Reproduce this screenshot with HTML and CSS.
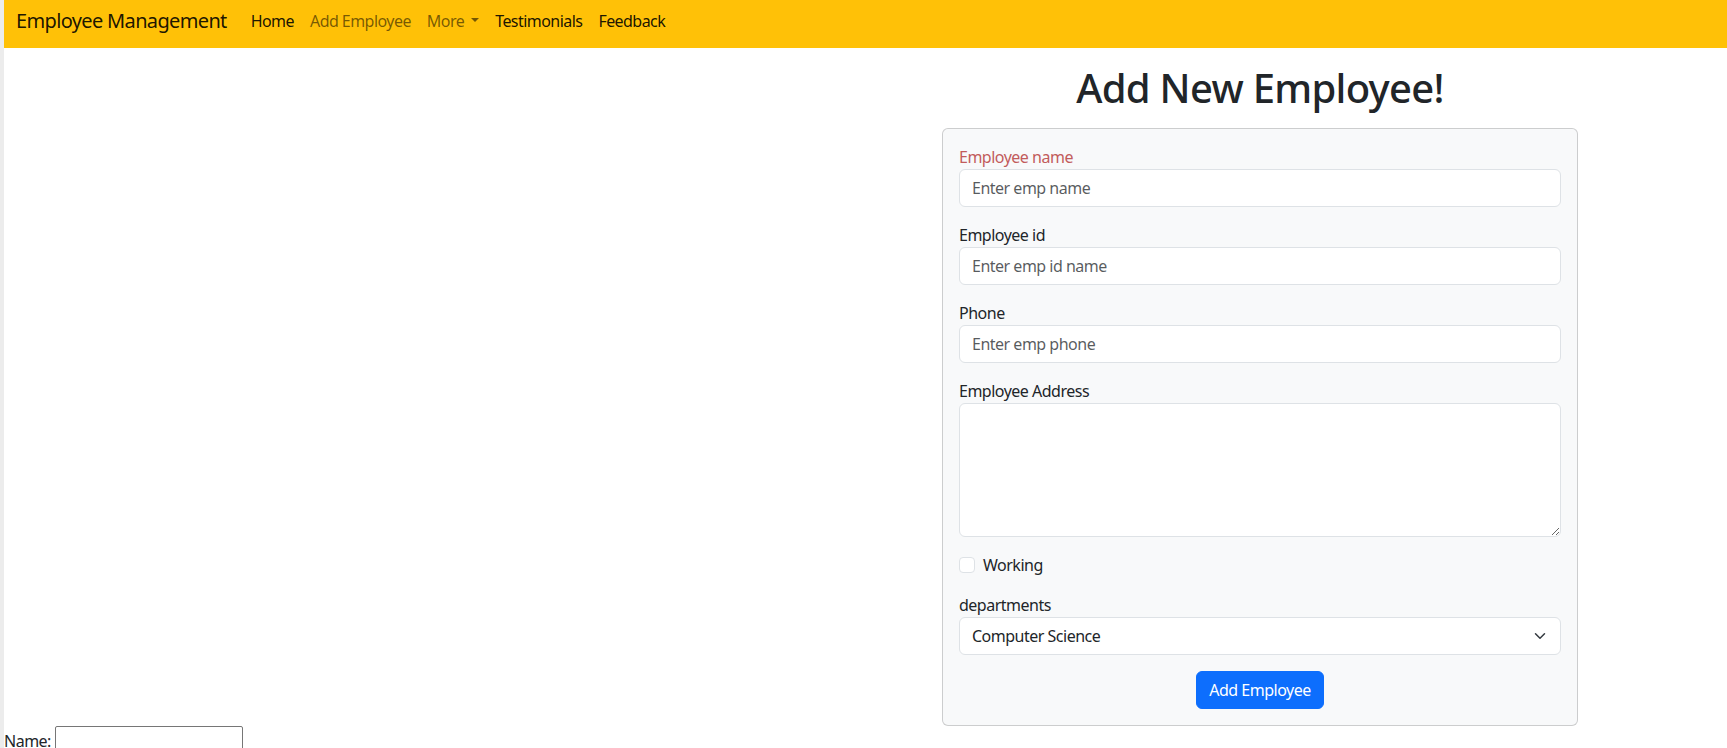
FILE: index.html
```html
<!DOCTYPE html>
<html lang="en">
<head>
<meta charset="utf-8">
<title>Employee Management</title>
<link rel="stylesheet" href="styles.css">
</head>
<body>
<div class="page">
  <nav class="navbar">
    <a class="brand" href="#">Employee Management</a>
    <ul class="nav">
      <li><a class="nav-link strong" href="#">Home</a></li>
      <li><a class="nav-link muted" href="#">Add Employee</a></li>
      <li><a class="nav-link muted dropdown" href="#">More</a></li>
      <li><a class="nav-link strong" href="#">Testimonials</a></li>
      <li><a class="nav-link strong" href="#">Feedback</a></li>
    </ul>
  </nav>

  <main class="main">
    <div class="left"></div>
    <section class="right">
      <h1 class="title">Add New Employee!</h1>
      <form class="card">
        <div class="group">
          <label class="label label-red" for="ename">Employee name</label>
          <input class="control" id="ename" type="text" placeholder="Enter emp name">
        </div>
        <div class="group">
          <label class="label" for="eid">Employee id</label>
          <input class="control" id="eid" type="text" placeholder="Enter emp id name">
        </div>
        <div class="group">
          <label class="label" for="ephone">Phone</label>
          <input class="control" id="ephone" type="text" placeholder="Enter emp phone">
        </div>
        <div class="group">
          <label class="label" for="eaddr">Employee Address</label>
          <textarea class="control area" id="eaddr" rows="5"></textarea>
        </div>
        <div class="check">
          <input class="check-box" id="working" type="checkbox">
          <label class="check-label" for="working">Working</label>
        </div>
        <div class="group">
          <label class="label" for="dept">departments</label>
          <div class="select-wrap">
            <select class="control select" id="dept">
              <option>Computer Science</option>
              <option>Mechanical</option>
              <option>Electrical</option>
            </select>
            <svg class="chevron" viewBox="0 0 16 16" width="16" height="12" aria-hidden="true">
              <path d="m2 5 6 6 6-6" fill="none" stroke="#343a40" stroke-width="2" stroke-linecap="round" stroke-linejoin="round"/>
            </svg>
          </div>
        </div>
        <div class="actions">
          <button class="btn" type="button">Add Employee</button>
        </div>
      </form>
    </section>
  </main>

  <div class="name-row">
    <label class="name-label" for="nm">Name:</label>
    <input class="name-input" id="nm" type="text">
  </div>
</div>
</body>
</html>
```

FILE: styles.css
```css
* {
  box-sizing: border-box;
}

html, body {
  margin: 0;
  padding: 0;
  background: #ffffff;
}

body {
  font-family: "Noto Sans", "Open Sans", sans-serif;
  font-size: 16px;
  line-height: 1.5;
  letter-spacing: -0.5px;
  color: #212529;
}

.page {
  border-left: 4px solid #ececec;
  min-height: 748px;
}

/* ---------- navbar ---------- */
.navbar {
  height: 48px;
  background: #ffc107;
  display: flex;
  align-items: center;
  padding: 0 12px 7px 12px;
}

.brand {
  font-size: 20px;
  line-height: 30px;
  letter-spacing: -0.65px;
  color: rgba(0, 0, 0, 0.9);
  text-decoration: none;
  margin-right: 16px;
}

.nav {
  list-style: none;
  margin: 0;
  padding: 0;
  display: flex;
  align-items: center;
}

.nav-link {
  display: block;
  padding: 0 8px;
  line-height: 24px;
  text-decoration: none;
  font-size: 16px;
  letter-spacing: -0.55px;
}

.nav-link.strong {
  color: rgba(0, 0, 0, 0.9);
}

.nav-link.muted {
  color: rgba(0, 0, 0, 0.55);
}

.dropdown::after {
  content: "";
  display: inline-block;
  margin-left: 7px;
  vertical-align: 0.255em;
  border-top: 0.3em solid;
  border-right: 0.3em solid transparent;
  border-left: 0.3em solid transparent;
  border-bottom: 0;
}

/* ---------- main layout ---------- */
.main {
  display: grid;
  grid-template-columns: 1fr 636px;
  padding-right: 149px;
}

.title {
  margin: 16px 0 16px 0;
  font-size: 40px;
  line-height: 48px;
  font-weight: 500;
  letter-spacing: -0.7px;
  text-align: center;
  color: #212529;
}

.card {
  background: #f8f9fa;
  border: 1px solid rgba(0, 0, 0, 0.175);
  border-radius: 6px;
  padding: 16px;
}

.group {
  margin-bottom: 16px;
}

.label {
  display: block;
  line-height: 24px;
}

.label-red {
  color: #c25c5c;
}

.control {
  display: block;
  width: 100%;
  height: 38px;
  padding: 6px 12px;
  font-family: inherit;
  font-size: 16px;
  line-height: 24px;
  letter-spacing: -0.5px;
  color: #212529;
  background: #ffffff;
  border: 1px solid #dee2e6;
  border-radius: 6px;
  outline: none;
}

.control::placeholder {
  color: rgba(33, 37, 41, 0.75);
}

.area {
  height: 134px;
  resize: vertical;
}

.check {
  display: flex;
  align-items: center;
  gap: 8px;
  height: 24px;
  margin-bottom: 16px;
}

.check-box {
  appearance: none;
  -webkit-appearance: none;
  width: 16px;
  height: 16px;
  margin: 0;
  background: #ffffff;
  border: 1px solid #dee2e6;
  border-radius: 4px;
}

.check-label {
  line-height: 24px;
}

.select-wrap {
  position: relative;
}

.select {
  appearance: none;
  -webkit-appearance: none;
  padding-right: 36px;
}

.chevron {
  position: absolute;
  right: 13px;
  top: 13px;
  pointer-events: none;
}

.actions {
  display: flex;
  justify-content: center;
}

.btn {
  font-family: inherit;
  font-size: 16px;
  line-height: 24px;
  letter-spacing: -0.5px;
  padding: 6px 12px;
  color: #ffffff;
  background: #0d6efd;
  border: 1px solid #0d6efd;
  border-radius: 6px;
}

/* ---------- bottom row ---------- */
.name-row {
  line-height: 24px;
}

.name-label {
  color: #212529;
}

.name-input {
  display: inline-block;
  vertical-align: baseline;
  width: 188px;
  height: 30px;
  padding: 1px 2px;
  font-family: inherit;
  font-size: 16px;
  line-height: 24px;
  border: 1px solid #767676;
  border-radius: 2px;
  background: #ffffff;
}
```
